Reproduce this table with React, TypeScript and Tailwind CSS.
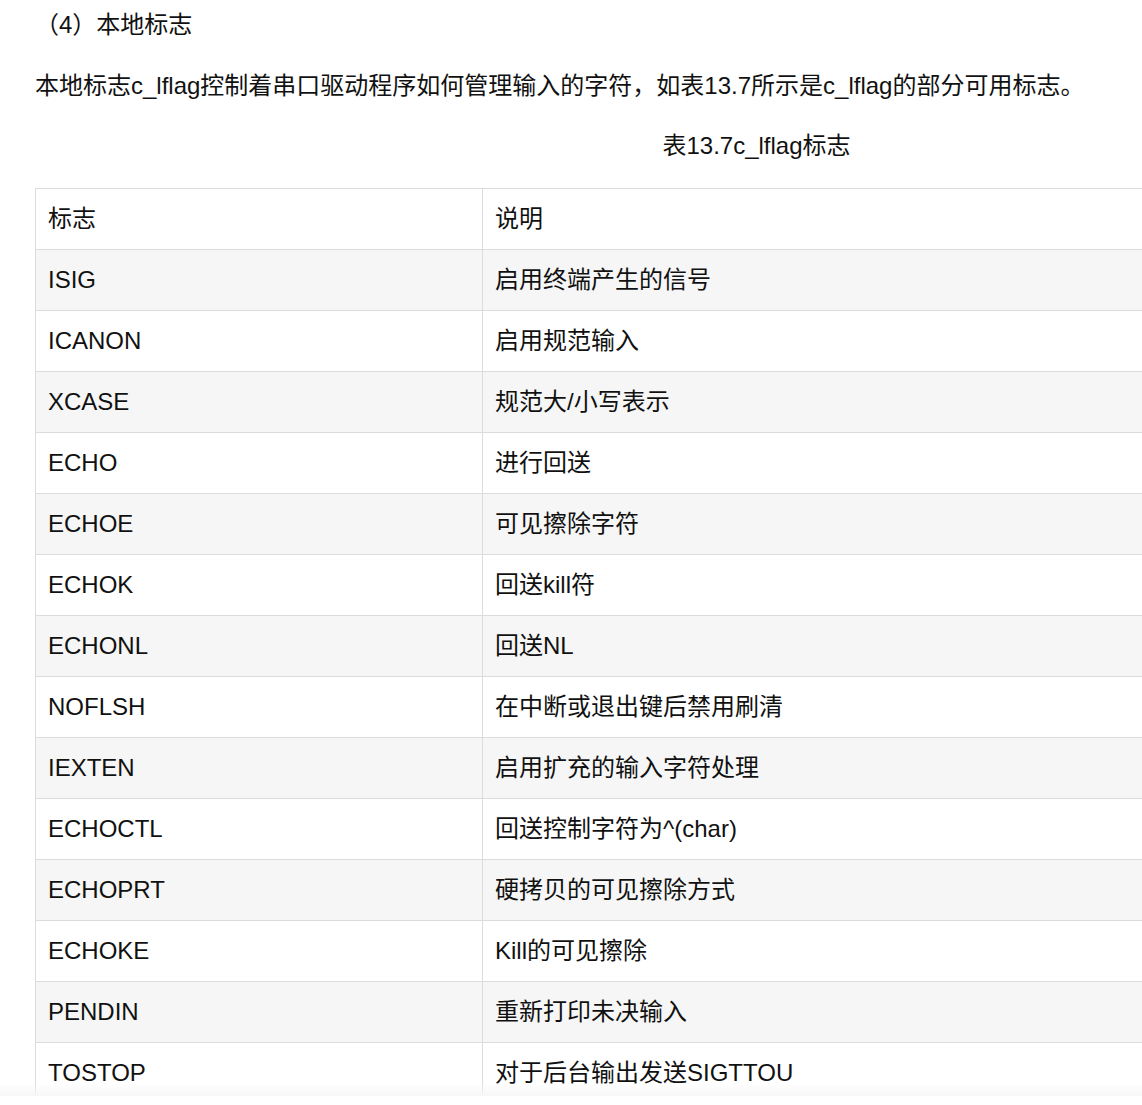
import React from "react";

const rows: [string, string][] = [
  ["ISIG", "启用终端产生的信号"],
  ["ICANON", "启用规范输入"],
  ["XCASE", "规范大/小写表示"],
  ["ECHO", "进行回送"],
  ["ECHOE", "可见擦除字符"],
  ["ECHOK", "回送kill符"],
  ["ECHONL", "回送NL"],
  ["NOFLSH", "在中断或退出键后禁用刷清"],
  ["IEXTEN", "启用扩充的输入字符处理"],
  ["ECHOCTL", "回送控制字符为^(char)"],
  ["ECHOPRT", "硬拷贝的可见擦除方式"],
  ["ECHOKE", "Kill的可见擦除"],
  ["PENDIN", "重新打印未决输入"],
  ["TOSTOP", "对于后台输出发送SIGTTOU"],
];

export default function App() {
  return (
    <div
      className="relative w-[1142px] h-[1105px] overflow-hidden bg-white text-[24px] text-[#111]"
      style={{ fontFamily: '"Liberation Sans", Arial, "Noto Sans CJK SC", sans-serif' }}
    >
      <div className="h-[1096px] overflow-hidden relative">
        <div className="w-[1478px] pl-[35px]">
          <div className="leading-[50px] h-[50px]">（4）本地标志</div>
          <div className="leading-[50px] h-[50px] mt-[11px] whitespace-nowrap">
            本地标志c_lflag控制着串口驱动程序如何管理输入的字符，如表13.7所示是c_lflag的部分可用标志。
          </div>
          <div className="leading-[50px] h-[50px] mt-[10px] text-center">表13.7c_lflag标志</div>
          <table className="mt-[17px] w-full border-collapse">
            <tbody>
              <tr className="bg-white h-[61px]">
                <td className="border border-[#dcdcdc] w-[447px] px-[12px] align-middle">标志</td>
                <td className="border border-[#dcdcdc] px-[12px] align-middle">说明</td>
              </tr>
              {rows.map(([a, b], i) => (
                <tr key={a} className={(i % 2 === 0 ? "bg-[#f6f6f6]" : "bg-white") + " h-[61px]"}>
                  <td className="border border-[#dcdcdc] w-[447px] px-[12px] align-middle">{a}</td>
                  <td className="border border-[#dcdcdc] px-[12px] align-middle">{b}</td>
                </tr>
              ))}
            </tbody>
          </table>
        </div>
        <div className="absolute left-0 right-0 bottom-0 h-[13px] bg-gradient-to-b from-white/0 to-[#f7f7f7]" />
      </div>
    </div>
  );
}
